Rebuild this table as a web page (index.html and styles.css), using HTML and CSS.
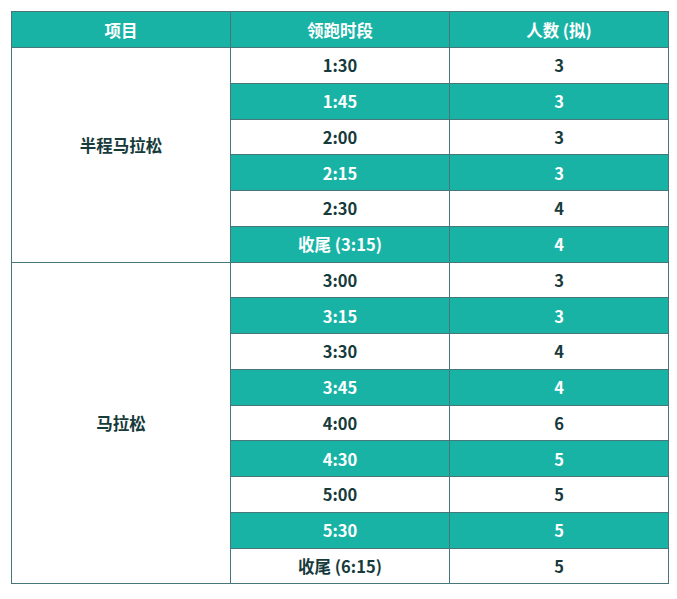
FILE: index.html
```html
<!DOCTYPE html>
<html lang="zh-CN">
<head>
<meta charset="utf-8">
<link rel="stylesheet" href="styles.css">
</head>
<body>
<div class="wrap">
<table class="pace">
  <thead>
    <tr><th>项目</th><th>领跑时段</th><th>人数 (拟)</th></tr>
  </thead>
  <tbody>
    <tr class="w"><td class="cat cat-half" rowspan="6">半程马拉松</td><td>1:30</td><td>3</td></tr>
    <tr class="t"><td>1:45</td><td>3</td></tr>
    <tr class="w"><td>2:00</td><td>3</td></tr>
    <tr class="t"><td>2:15</td><td>3</td></tr>
    <tr class="w"><td>2:30</td><td>4</td></tr>
    <tr class="t"><td>收尾 (3:15)</td><td>4</td></tr>
    <tr class="w"><td class="cat" rowspan="9">马拉松</td><td>3:00</td><td>3</td></tr>
    <tr class="t"><td>3:15</td><td>3</td></tr>
    <tr class="w"><td>3:30</td><td>4</td></tr>
    <tr class="t"><td>3:45</td><td>4</td></tr>
    <tr class="w"><td>4:00</td><td>6</td></tr>
    <tr class="t"><td>4:30</td><td>5</td></tr>
    <tr class="w"><td>5:00</td><td>5</td></tr>
    <tr class="t"><td>5:30</td><td>5</td></tr>
    <tr class="w"><td>收尾 (6:15)</td><td>5</td></tr>
  </tbody>
</table>
</div>
</body>
</html>
```
FILE: styles.css
```css
html, body {
  margin: 0;
  padding: 0;
  background: #ffffff;
}
.wrap {
  padding: 11px 0 0 11px;
}
.pace {
  border-collapse: collapse;
  width: 658px;
  table-layout: fixed;
  font-family: "Noto Sans CJK SC", "Noto Sans", sans-serif;
  font-weight: 700;
  font-size: 16.5px;
  color: #173a3b;
}
.pace th, .pace td {
  border: 1px solid #48777b;
  text-align: center;
  padding: 0;
  height: 34.75px;
  line-height: 20px;
}
.pace th {
  background: #19b3a6;
  color: #ffffff;
  height: 35px;
}
.pace tr.t td {
  background: #19b3a6;
  color: #ffffff;
}
.pace td.cat {
  background: #ffffff;
  color: #173a3b;
}
.pace td.cat-half {
  padding-bottom: 20px;
}
```
